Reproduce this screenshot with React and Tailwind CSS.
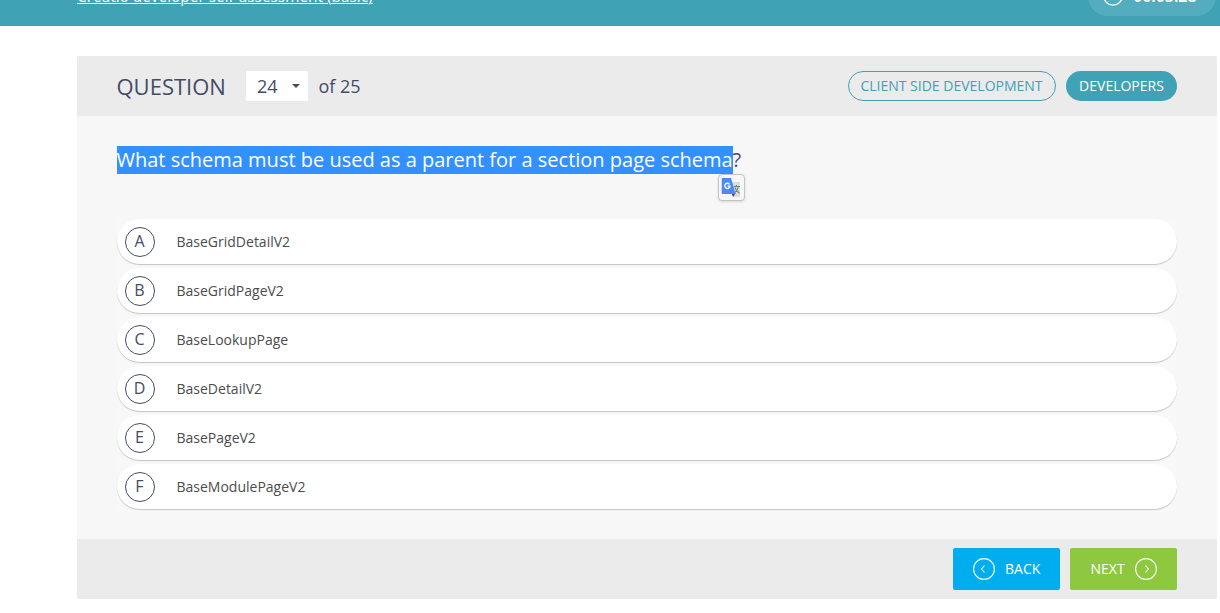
const answers = [
  ['A', 'BaseGridDetailV2'],
  ['B', 'BaseGridPageV2'],
  ['C', 'BaseLookupPage'],
  ['D', 'BaseDetailV2'],
  ['E', 'BasePageV2'],
  ['F', 'BaseModulePageV2'],
];

function TopBar() {
  return (
    <header className="flex h-[26px] items-end justify-between overflow-hidden bg-[#3fa2b5] pr-1 pl-[77px] text-white">
      <a className="mb-[19px] text-[15.4px] leading-5 whitespace-nowrap underline decoration-1 underline-offset-1">
        Creatio developer self-assessment (basic)
      </a>
      <div className="mb-[10px] flex h-10 w-[128px] shrink-0 items-center rounded-full bg-[#53adbe] pl-[15px]">
        <svg className="size-5 shrink-0" viewBox="0 0 20 20" fill="none" stroke="currentColor" strokeWidth="1.300">
          <circle cx="10" cy="10" r="9.200" />
          <path d="M10 4v6h3" />
        </svg>
        <span className="ml-[10px] text-base leading-5 font-semibold">00:05:28</span>
      </div>
    </header>
  );
}

function TranslateIcon() {
  return (
    <svg className="mr-px size-5 shrink-0" viewBox="0 0 20 20">
      <path d="M7 4h11.200c.5 0 .8.300.8.800v13.400c0 .5-.3.800-.8.800h-6.200z" fill="#dcdcdc" />
      <path d="M10.500 15h4.200L12 19z" fill="#3b3fb6" />
      <path d="M.8 0h9.200l4.500 16H1.500c-.5 0-.8-.3-.8-.8z" fill="#4c8bf5" />
      <path d="M8.500 6.300A2.600 2.600 0 1 0 9 8.200H6.600" fill="none" stroke="#fff" strokeWidth="1.300" />
      <path d="M12.500 8.500h6.500M15.500 7v1.500M17.500 8.500c-.6 3-2 5-4.200 6.500M13.900 9.500c.8 2.400 2.200 4.200 4.600 5.800" fill="none" stroke="#6f8389" strokeWidth="1.100" />
    </svg>
  );
}

function Chevron({ next }) {
  return (
    <svg className="size-[22px]" viewBox="0 0 22 22" fill="none" stroke="currentColor" strokeWidth="1.100">
      <circle cx="11" cy="11" r="10.400" />
      <path d={next ? 'M10.500 7.500l3 3.500-3 3.500' : 'M11.500 7.500L8.500 11l3 3.500'} />
    </svg>
  );
}

export default function App() {
  return (
    <div className="h-[613px] overflow-hidden bg-white font-['Open_Sans',sans-serif] text-[#444b66]">
      <TopBar />
      <main className="mt-[30px] mr-[3px] ml-[77px] overflow-hidden rounded-[2px] bg-[#f7f7f7]">
        <div className="flex h-[60px] items-center bg-[#ebebeb] px-10">
          <h1 className="-ml-[0.5px] w-[129.5px] text-[22px] leading-[30px]">QUESTION</h1>
          <button className="flex h-[30px] w-[62px] items-center justify-between rounded-[2px] bg-white pr-2 pl-[11px] text-lg leading-[30px]">
            24
            <svg className="h-1 w-2" viewBox="0 0 8 4" fill="currentColor"><path d="M0 0h8L4 4z" /></svg>
          </button>
          <span className="ml-[10.5px] text-lg">of 25</span>
          <div className="ml-auto flex gap-[10px] text-sm leading-7">
            <span className="flex h-[30px] w-[208px] items-center justify-center rounded-full border border-[#3fa2b5] pr-px whitespace-nowrap text-[#3fa2b5]">CLIENT SIDE DEVELOPMENT</span>
            <span className="flex h-[30px] w-[111px] items-center justify-center rounded-full bg-[#3fa2b5] text-white">DEVELOPERS</span>
          </div>
        </div>

        <section className="h-[423px] px-10 pt-[30px]">
          <div className="relative flex h-[73px] items-start text-xl leading-7">
            <span className="w-[616px] bg-[#3390ff] whitespace-nowrap text-white"><span className="-ml-[0.5px]">What schema must be used as a parent for a section page schema</span></span>
            <span className="-ml-[0.5px]">?</span>
            <button className="absolute top-7 left-[601px] flex h-[27px] w-[27px] items-center justify-center rounded-[4px] border border-[#c4c4c4] bg-[#f7f7f7] shadow-sm">
              <TranslateIcon />
            </button>
          </div>
          <ul>
            {answers.map(([letter, label]) => (
              <li key={letter} className="h-[49px] bg-[#f8f8f8]">
                <div className="flex h-[45px] items-center rounded-full bg-white pl-2 shadow-[0_1px_1px_#c3c5c5]">
                  <span className="flex size-[30px] items-center justify-center rounded-full border border-[#444b66] pr-px pb-[2px] text-base leading-[26px]">{letter}</span>
                  <span className="ml-[21.5px] text-sm text-[#4c4c4c]">{label}</span>
                </div>
              </li>
            ))}
          </ul>
        </section>

        <footer className="flex h-[60px] items-center justify-end gap-[10px] bg-[#ebebeb] px-10 text-sm text-white">
          <button className="flex h-[42px] w-[107px] items-center gap-[10px] rounded-[2px] bg-[#00aef0] pl-5"><Chevron />BACK</button>
          <button className="flex h-[42px] w-[107px] items-center justify-between rounded-[2px] bg-[#8dc83f] pr-5 pl-[20.5px]">NEXT<Chevron next /></button>
        </footer>
      </main>
    </div>
  );
}
